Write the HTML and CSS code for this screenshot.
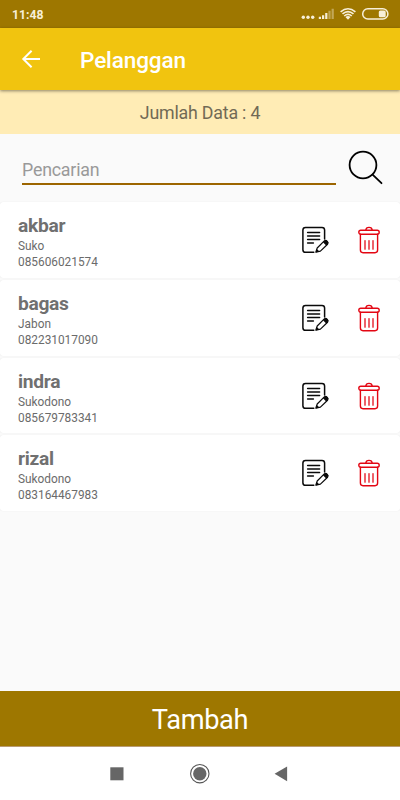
FILE: index.html
```html
<!DOCTYPE html>
<html lang="id">
<head>
<meta charset="utf-8">
<title>Pelanggan</title>
<link rel="stylesheet" href="styles.css">
</head>
<body>
<svg class="defs" aria-hidden="true">
  <symbol id="edit" viewBox="0 0 28 28">
    <g fill="none" stroke="#0a0a0a" stroke-width="1.5" stroke-linecap="round" stroke-linejoin="round">
      <path d="M22.6 13V4Q22.6 1.4 20 1.4H3.5Q.9 1.4 .9 4V23.7Q.9 26.3 3.5 26.3H11.8"/>
      <path d="M5.6 6.6H17.6M5.6 10.1H17.6M5.6 13.6H17.6M5.6 17H11.4"/>
      <path stroke-width="1.2" d="M13.8 26.2L15.2 22L22.3 14.9Q23.8 13.8 25.3 15.3T25.6 18.2L18.4 25.1Z"/>
    </g>
    <path d="M21 16.2L22.6 14.7Q24 13.8 25.4 15.2T25.8 17.9L24.2 19.4ZM13.8 26.4L14.9 23L17.4 25.4Z" fill="#0a0a0a"/>
  </symbol>
  <symbol id="trash" viewBox="0 0 22 28">
    <g fill="none" stroke="#e30613" stroke-width="1.4" stroke-linecap="round" stroke-linejoin="round">
      <path d="M7.8 4.2Q8 1.4 11 1.4T14.2 4.2"/>
      <rect x=".8" y="4.3" width="20.4" height="4" rx="2"/>
      <path d="M2.4 8.3V24.1Q2.4 26.7 5 26.7H17Q19.6 26.7 19.6 24.1V8.3"/>
      <path stroke-width="1.25" d="M7 14.5V23.2M11 14.5V23.2M15 14.5V23.2"/>
    </g>
  </symbol>
</svg>
<header class="status">
  <span>11:48</span>
  <svg width="90" height="14" viewBox="0 0 90 14">
    <g fill="#f7efd9">
      <circle cx="3.3" cy="10.2" r="1.7"/><circle cx="8" cy="10.2" r="1.7"/><circle cx="12.7" cy="10.2" r="1.7"/>
      <path d="M18.8 9.8H21V12h-2.2zM22 8.3h2.2V12H22zM25.2 6h2.2v6h-2.2z"/>
      <path opacity=".4" d="M28.4 3.8h2.2V12h-2.2zM31.6 1.8h2.2V12h-2.2z"/>
      <path d="M45.4 10L48 12.8L50.6 10Q48 8 45.4 10Z"/>
      <rect x="78.8" y="3.5" width="6.9" height="6.8" rx="1.5"/>
    </g>
    <g fill="none" stroke="#f7efd9" stroke-width="1.6">
      <path d="M40.6 4.9Q48 -1.4 55.4 4.9M42.5 6.9Q48 2.2 53.5 6.9M44.2 9Q48 5.8 51.8 9"/>
      <rect x="62.7" y="1.7" width="25.2" height="10.4" rx="5.2" stroke-width="1.5"/>
    </g>
  </svg>
</header>
<div class="appbar">
  <svg width="20" height="20" viewBox="0 0 20 20" fill="none" stroke="#fff" stroke-width="2"><path d="M19 10H2.6M10.6 1.7L2.3 10L10.6 18.3"/></svg>
  <h1>Pelanggan</h1>
</div>
<div class="count">Jumlah Data : 4</div>
<div class="search">
  <div class="field">Pencarian</div>
  <svg width="36" height="36" viewBox="0 0 36 36" fill="none" stroke="#000" stroke-width="1.8" stroke-linecap="round"><circle cx="15" cy="15" r="13.4"/><path d="M24.6 24.6L33.5 33.2"/></svg>
</div>
<main class="list">
  <article class="card"><div class="info"><h2>akbar</h2><p>Suko</p><p>085606021574</p></div><svg class="edit"><use href="#edit"/></svg><svg class="trash"><use href="#trash"/></svg></article>
  <article class="card"><div class="info"><h2>bagas</h2><p>Jabon</p><p>082231017090</p></div><svg class="edit"><use href="#edit"/></svg><svg class="trash"><use href="#trash"/></svg></article>
  <article class="card"><div class="info"><h2>indra</h2><p>Sukodono</p><p>085679783341</p></div><svg class="edit"><use href="#edit"/></svg><svg class="trash"><use href="#trash"/></svg></article>
  <article class="card"><div class="info"><h2>rizal</h2><p>Sukodono</p><p>083164467983</p></div><svg class="edit"><use href="#edit"/></svg><svg class="trash"><use href="#trash"/></svg></article>
</main>
<div class="add">Tambah</div>
<nav class="nav">
  <svg width="400" height="53" viewBox="0 0 400 53" fill="#666">
    <rect x="110.3" y="20.3" width="13.2" height="13"/>
    <circle cx="199.8" cy="26.7" r="6.7"/>
    <circle cx="199.8" cy="26.7" r="9.2" fill="none" stroke="#555" stroke-width="1.1"/>
    <path d="M287.1 19.5V34.2L274.6 26.8Z"/>
  </svg>
</nav>
</body>
</html>
```
FILE: styles.css
```css
* { box-sizing: border-box; }
body {
  margin: 0;
  width: 400px;
  height: 800px;
  overflow: hidden;
  display: flex;
  flex-direction: column;
  background: #fafafa;
  color: #6b6b6b;
  font-family: Roboto, sans-serif;
}
h1, h2, p { margin: 0; }
svg { display: block; flex: none; }
.defs { position: absolute; width: 0; height: 0; }
.status {
  height: 28px;
  flex: none;
  display: flex;
  align-items: center;
  justify-content: space-between;
  padding: 0 10px 0 12px;
  background: #9e7700;
  color: #f7efd9;
  font-size: 12.2px;
  font-weight: 700;
}
.status span { padding-top: 1px; }
.appbar {
  height: 62px;
  flex: none;
  display: flex;
  align-items: center;
  gap: 39px;
  padding: 0 0 0 21px;
  background: #f1c40f;
  color: #fff;
  box-shadow: 0 1px 3px rgba(0, 0, 0, .45);
  z-index: 1;
}
.appbar svg { margin-top: -1px; }
.appbar h1 { font-size: 22.6px; font-weight: 500; letter-spacing: -.15px; padding-top: 2px; }
.count {
  height: 44px;
  flex: none;
  background: #ffecb5;
  color: #716a55;
  font-size: 17.8px;
  letter-spacing: -.2px;
  line-height: 46px;
  text-align: center;
}
.search {
  height: 68px;
  flex: none;
  display: flex;
  gap: 12px;
  padding: 16px 0 0 22px;
}
.field {
  width: 314px;
  height: 35px;
  border-bottom: 2px solid #9c6500;
  color: #999;
  font-size: 17.8px;
  letter-spacing: -.2px;
  line-height: 39px;
}
.list { flex: 1; display: flex; flex-direction: column; gap: 2px; }
.card {
  height: 75.8px;
  display: flex;
  align-items: flex-start;
  padding: 0 20px 0 18px;
  background: #fff;
  border-radius: 3px;
  box-shadow: 0 0 1px rgba(0, 0, 0, .12);
}
.info { flex: 1; padding-top: 12px; }
.info h2 { font-size: 19.2px; line-height: 24px; letter-spacing: -.3px; font-weight: 700; color: #707070; }
.info p { font-size: 11.85px; line-height: 16px; }
.edit { width: 28px; height: 28px; margin: 24.1px 28px 0 0; }
.trash { width: 22px; height: 28px; margin-top: 24.1px; }
.add {
  height: 56px;
  flex: none;
  background: #9e7700;
  border-bottom: 1px solid #b99b72;
  color: #fff;
  font-size: 27.2px;
  letter-spacing: -.35px;
  line-height: 59px;
  text-align: center;
}
.nav { height: 53px; flex: none; background: #fff; }
```
